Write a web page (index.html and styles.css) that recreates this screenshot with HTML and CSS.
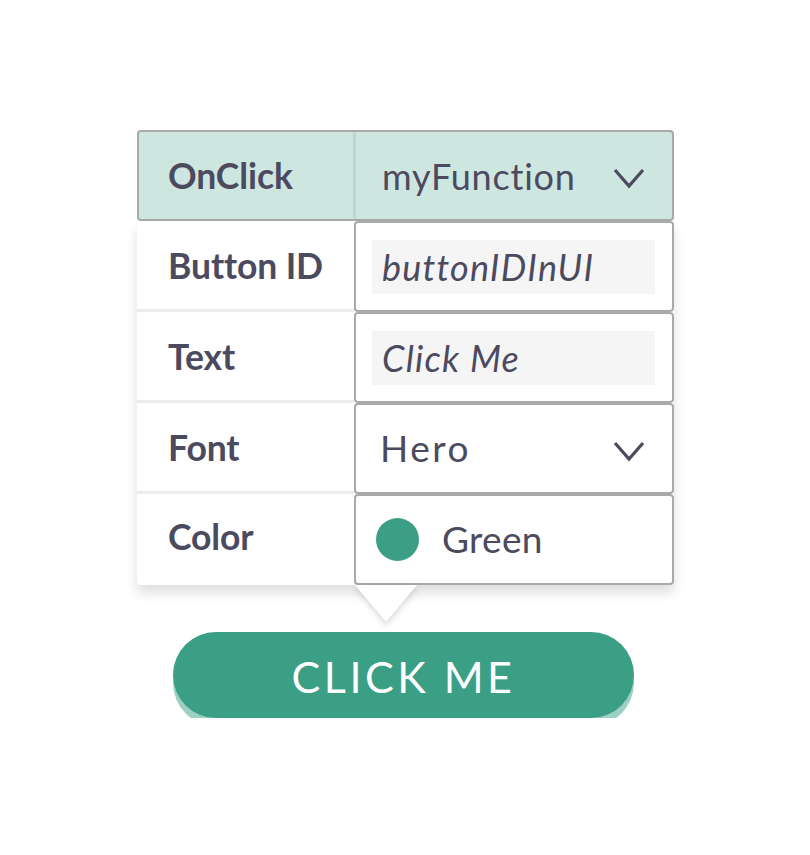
FILE: index.html
```html
<!DOCTYPE html>
<html>
<head>
<meta charset="utf-8">
<link rel="stylesheet" href="styles.css">
</head>
<body>
<div class="stage">
  <div class="panel">
    <div class="row header">
      <div class="label">OnClick</div>
      <div class="cell select">
        <span class="value">myFunction</span>
        <svg class="chev" width="32" height="22" viewBox="0 0 32 22"><path d="M2 3 L16 19 L30 3" fill="none" stroke="#4b4a5e" stroke-width="3.2"/></svg>
      </div>
    </div>
    <div class="body">
      <div class="row">
        <div class="label sep">Button ID</div>
        <div class="cell"><div class="input">buttonIDInUI</div></div>
      </div>
      <div class="row">
        <div class="label sep">Text</div>
        <div class="cell"><div class="input">Click Me</div></div>
      </div>
      <div class="row">
        <div class="label sep">Font</div>
        <div class="cell select">
          <span class="value hero">Hero</span>
          <svg class="chev" width="32" height="22" viewBox="0 0 32 22"><path d="M2 3 L16 19 L30 3" fill="none" stroke="#4b4a5e" stroke-width="3.2"/></svg>
        </div>
      </div>
      <div class="row">
        <div class="label last">Color</div>
        <div class="cell colorcell">
          <span class="dot"></span>
          <span class="value green">Green</span>
        </div>
      </div>
    </div>
    <div class="tail-wrap"><div class="tail"></div></div>
  </div>
  <div class="button-wrap">
    <div class="button">CLICK ME</div>
  </div>
</div>
</body>
</html>
```
FILE: styles.css
```css
html, body {
  margin: 0;
  padding: 0;
  background: #ffffff;
}
.stage {
  width: 537px;
  margin: 130px 0 0 137px;
  display: flex;
  flex-direction: column;
}
.panel {
  display: flex;
  flex-direction: column;
  color: #4b4a5e;
}
.row {
  display: grid;
  grid-template-columns: 217px 1fr;
  height: 91px;
}
.header {
  background: #cde6df;
  border: 2px solid #a9a9a9;
  border-radius: 4px;
  box-sizing: border-box;
  height: 91px;
}
.header .label {
  padding-left: 29px;
  border-right: 3px solid #bcd8d0;
}
.header .cell {
  border: none;
  padding-left: 26px;
  padding-right: 27px;
}
.body {
  background: #fff;
  box-shadow: 0 8px 12px rgba(0, 0, 0, 0.13);
  border-radius: 0 0 4px 4px;
}
.label {
  display: flex;
  align-items: center;
  padding-left: 31px;
  font-family: "Lato", "Open Sans", sans-serif;
  font-weight: 700;
  font-size: 35.5px;
  letter-spacing: -0.1px;
  box-sizing: border-box;
}
.label.sep {
  border-bottom: 3px solid #ececec;
}
.label.last {
  padding-bottom: 6px;
}
.cell {
  border: 2px solid #a9a9a9;
  border-radius: 4px;
  box-sizing: border-box;
  display: flex;
  align-items: center;
  padding: 0 17px 0 16px;
  background: #fff;
}
.header .cell { background: transparent; }
.select {
  justify-content: space-between;
}
.body .select {
  padding-left: 24px;
  padding-right: 27px;
}
.value {
  font-family: "Lato", "Open Sans", sans-serif;
  font-size: 36px;
  font-weight: 400;
  letter-spacing: 0.8px;
}
.chev {
  display: block;
  margin-top: 4px;
}
.input {
  flex: 1;
  height: 54px;
  background: #f5f5f5;
  display: flex;
  align-items: center;
  padding-left: 10px;
  font-family: "Lato", "Open Sans", sans-serif;
  font-style: italic;
  font-size: 36px;
  font-weight: 400;
  letter-spacing: 1.2px;
}
.hero, .green {
  font-family: "Lato", sans-serif;
  font-weight: 400;
  font-size: 37px;
}
.hero {
  letter-spacing: 2.5px;
  margin-top: -3px;
}
.green {
  letter-spacing: 0.3px;
  margin-top: -3px;
}
.colorcell {
  padding-left: 20px;
}
.dot {
  width: 43px;
  height: 43px;
  border-radius: 50%;
  background: #3a9f85;
  margin-right: 23px;
}
.tail-wrap {
  margin-left: 218px;
  width: 62px;
  height: 40px;
  filter: drop-shadow(0 3px 3px rgba(0, 0, 0, 0.16));
}
.tail {
  width: 62px;
  height: 37px;
  background: #fff;
  clip-path: polygon(0 0, 100% 0, 50% 100%);
}
.button-wrap {
  margin-top: 7px;
  padding-left: 36px;
}
.button {
  width: 461px;
  height: 86px;
  border-radius: 43px;
  background: #3a9f85;
  box-shadow: 0 8px 0 #9dd0c2;
  color: #fff;
  display: flex;
  align-items: center;
  justify-content: center;
  font-family: "Lato", sans-serif;
  font-weight: 400;
  font-size: 43px;
  letter-spacing: 3.5px;
  padding-top: 2px;
  box-sizing: border-box;
}
```
